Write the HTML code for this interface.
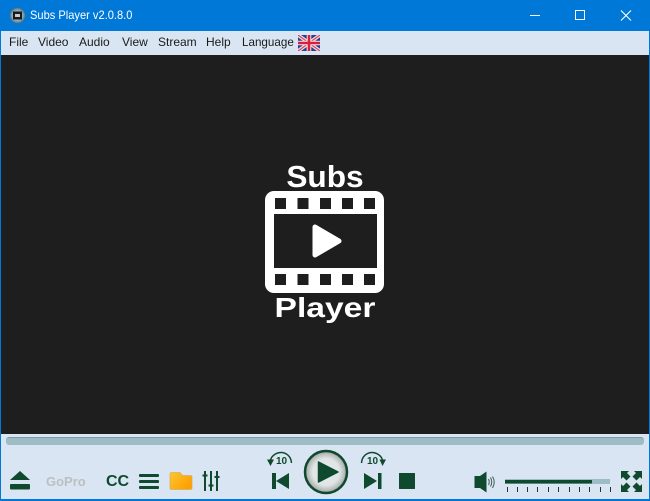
<!DOCTYPE html>
<html><head><meta charset="utf-8"><style>
html,body{margin:0;padding:0;background:#d9e5f2}
#r{position:relative;width:650px;height:501px;overflow:hidden;background:#d9e5f2;font-family:"Liberation Sans",sans-serif}
.a{position:absolute}
.m{position:absolute;top:35px;font-size:12px;line-height:14px;color:#1a1a1a;white-space:nowrap}
</style></head><body><div id="r">
<div class="a" style="left:0;top:0;width:650px;height:31px;background:#0078d7"></div>
<div class="a" style="left:0;top:31px;width:1px;height:470px;background:#0078d7"></div>
<div class="a" style="left:649px;top:31px;width:1px;height:470px;background:#0078d7"></div>
<div class="a" style="left:0;top:499px;width:650px;height:2px;background:#0078d7"></div>
<svg class="a" style="left:9px;top:7px" width="17" height="17" viewBox="0 0 17 17"><defs><radialGradient id="g1"><stop offset="0" stop-color="#c4ccd0"/><stop offset=".7" stop-color="#8fa3ad"/><stop offset="1" stop-color="#2f6f90"/></radialGradient></defs><circle cx="8.500" cy="8.500" r="8" fill="url(#g1)"/><rect x="4" y="4.500" width="9" height="8" fill="#161c1e"/><rect x="6" y="7" width="5" height="3" fill="#c4ccd0"/></svg>
<div class="a" style="left:30px;top:8px;font-size:12px;line-height:15px;color:#fff;white-space:nowrap;transform-origin:0 0;transform:scaleX(.925)">Subs Player v2.0.8.0</div>
<svg class="a" style="left:520px;top:0" width="130" height="31" viewBox="0 0 130 31" fill="none" stroke="#fff" stroke-width="1"><path d="M10 15.500H20"/><rect x="55.500" y="10.500" width="9" height="9"/><path d="M101 10.500L111 20.500M111 10.500L101 20.500" stroke-width="1.100"/></svg>
<div class="m" style="left:9px">File</div>
<div class="m" style="left:38px">Video</div>
<div class="m" style="left:79px">Audio</div>
<div class="m" style="left:122px">View</div>
<div class="m" style="left:158px">Stream</div>
<div class="m" style="left:206px">Help</div>
<div class="m" style="left:242px;transform-origin:0 0;transform:scaleX(.97)">Language</div>
<svg class="a" style="left:298px;top:35px" width="22" height="16" viewBox="0 0 22 16"><rect width="22" height="16" fill="#2b3f88"/><path d="M0 0L22 16M22 0L0 16" stroke="#f0dfe4" stroke-width="3.600"/><path d="M0 0L22 16M22 0L0 16" stroke="#d8486a" stroke-width="1.300"/><path d="M11 0V16M0 8H22" stroke="#f4e6ea" stroke-width="4.600"/><path d="M11 0V16M0 8H22" stroke="#d8203a" stroke-width="2.600"/></svg>
<div class="a" style="left:1px;top:55px;width:648px;height:379px;background:#1e1e1e"></div>
<div class="a" style="left:220px;top:159px;width:210px;text-align:center;font-size:31px;line-height:36px;font-weight:bold;color:#fff;transform:scaleX(1.02)">Subs</div>
<svg class="a" style="left:265px;top:191px" width="119" height="102" viewBox="0 0 119 102"><rect width="119" height="102" rx="9" fill="#fff"/>
<g fill="#1e1e1e"><rect x="10" y="7" width="11" height="11"/><rect x="32.500" y="7" width="11" height="11"/><rect x="55" y="7" width="11" height="11"/><rect x="77" y="7" width="11" height="11"/><rect x="99" y="7" width="11" height="11"/>
<rect x="10" y="83" width="11" height="11"/><rect x="32.500" y="83" width="11" height="11"/><rect x="55" y="83" width="11" height="11"/><rect x="77" y="83" width="11" height="11"/><rect x="99" y="83" width="11" height="11"/>
<rect x="9" y="23" width="103" height="54"/></g>
<path d="M50 36L74 50L50 64Z" fill="#fff" stroke="#fff" stroke-width="5" stroke-linejoin="round"/></svg>
<div class="a" style="left:220px;top:292px;width:210px;text-align:center;font-size:28px;line-height:32px;font-weight:bold;color:#fff;transform:scaleX(1.2)">Player</div>
<div class="a" style="left:6px;top:437px;width:638px;height:8px;border-radius:3px;background:#9dbcc6;border-top:1px solid #7f9aa3;box-sizing:border-box"></div>
<svg class="a" style="left:0;top:465px" width="230" height="36" viewBox="0 0 230 36"><defs><linearGradient id="g3" x1="0" y1="0" x2="1" y2="0.600"><stop offset="0" stop-color="#fcc631"/><stop offset="1" stop-color="#ff9f00"/></linearGradient></defs>
<g fill="#0f4a2e"><path d="M20 6L30 15H10Z"/><rect x="10" y="19" width="20" height="5.500" rx="1"/><rect x="139" y="9" width="20" height="3" rx="1"/><rect x="139" y="15" width="20" height="3" rx="1"/><rect x="139" y="21" width="20" height="3" rx="1"/></g>
<path d="M170 9a1.500 1.500 0 0 1 1.500-1.500H180l2.500 3h8a1.500 1.500 0 0 1 1.500 1.500V23a1.500 1.500 0 0 1-1.500 1.500h-19.500A1.500 1.500 0 0 1 170 23Z" fill="url(#g3)" stroke="#d8b060" stroke-width=".8"/>
<g stroke="#0f4a2e" stroke-width="2" fill="none"><path d="M205 6V26M211 6V26M217 6V26"/><path d="M202.500 10.500H207.500M208.500 20.500H213.500M214.500 12H219.500"/></g></svg>
<div class="a" style="left:46px;top:474px;font-size:13px;line-height:16px;font-weight:bold;color:#bcbfc2;white-space:nowrap">GoPro</div>
<div class="a" style="left:106px;top:472px;font-size:16px;line-height:19px;font-weight:bold;color:#0f4a2e;white-space:nowrap">CC</div>
<svg class="a" style="left:260px;top:448px" width="170" height="53" viewBox="0 0 170 53"><defs><radialGradient id="g2" r=".52"><stop offset="0" stop-color="#e8edf0"/><stop offset=".62" stop-color="#dfe4e4"/><stop offset=".85" stop-color="#b5bbb8"/><stop offset="1" stop-color="#7e8985"/></radialGradient></defs>
<g fill="none" stroke="#0f4a2e" stroke-width="1.500"><path d="M10.500 12C12 7 17 4.500 21 4.500C26 4.500 31 8 31.500 15"/><path d="M122.500 12C121 7 116 4.500 112 4.500C107 4.500 102 8 101.500 15"/></g>
<g fill="#0f4a2e"><path d="M7 11.500H14L10.500 18Z"/><path d="M119.500 11.500H126L122.500 18Z"/>
<rect x="12" y="25" width="4" height="16"/><path d="M29 25V41L16 33Z"/>
<path d="M104 25V41L117 33Z"/><rect x="118" y="25" width="3.500" height="16"/>
<rect x="139" y="25" width="16" height="16" rx=".5"/></g>
<circle cx="66" cy="24" r="21" fill="url(#g2)" stroke="#0f4a2e" stroke-width="2.500"/>
<path d="M58.500 14V34L78 24Z" fill="#0f4a2e" stroke="#0f4a2e" stroke-width="1.500" stroke-linejoin="round"/></svg>
<div class="a" style="left:276px;top:456px;font-size:10px;line-height:12px;font-weight:bold;color:#0f4a2e">10</div>
<div class="a" style="left:367px;top:456px;font-size:10px;line-height:12px;font-weight:bold;color:#0f4a2e">10</div>
<svg class="a" style="left:470px;top:465px" width="180" height="36" viewBox="0 0 180 36"><path d="M4.500 11H10L16.500 6.500V27.500L10 23H4.500Z" fill="#0f4a2e"/><g fill="none" stroke="#3d5a50" stroke-width="1"><path d="M18.500 14Q20 17 18.500 20"/><path d="M20.500 12.500Q23 17 20.500 21.500"/><path d="M22.500 11.500Q26 17 22.500 23"/></g>
<rect x="35" y="14" width="105" height="5" fill="#9dbcc6"/><rect x="35" y="15" width="87" height="3.500" fill="#0f4a2e"/>
<g stroke="#1a3a2c" stroke-width="1"><path d="M37.500 22V27M47.500 22V27M57.500 22V27M67.500 22V27M78.500 22V27M88.500 22V27M99.500 22V27M109.500 22V27M119.500 22V27M130.500 22V27M140.500 22V27"/></g>
<g fill="#0f4a2e"><path d="M151 6H159L157 8L160.500 11.500L156.500 15.500L153 12L151 14Z"/><path transform="translate(323 0) scale(-1 1)" d="M151 6H159L157 8L160.500 11.500L156.500 15.500L153 12L151 14Z"/><path transform="translate(0 33) scale(1 -1)" d="M151 6H159L157 8L160.500 11.500L156.500 15.500L153 12L151 14Z"/><path transform="translate(323 33) scale(-1 -1)" d="M151 6H159L157 8L160.500 11.500L156.500 15.500L153 12L151 14Z"/></g></svg>
</div></body></html>
